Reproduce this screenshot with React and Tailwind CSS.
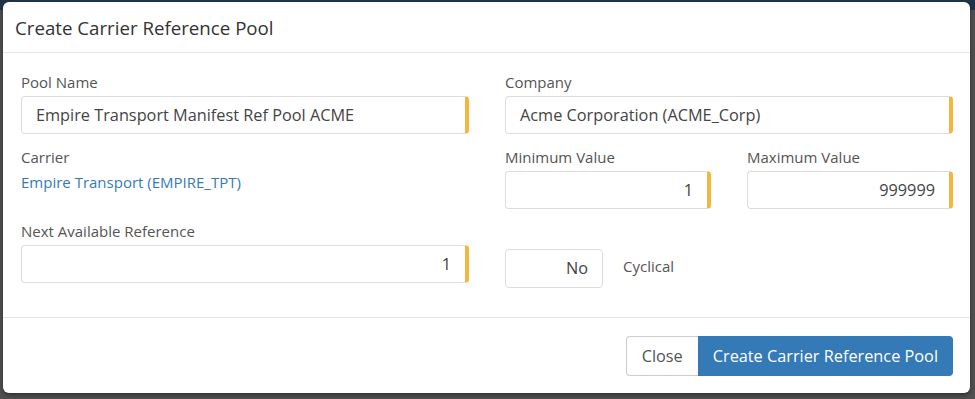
const FONT = { fontFamily: '"Open Sans", "Noto Sans", sans-serif' }

function Field({ label, value, align = 'left', className = '' }) {
  return (
    <div className={className}>
      <label className="block text-[15px] leading-5 text-[#555] mb-[4px]">{label}</label>
      <div className={`h-[38px] flex items-center px-[14px] bg-white border border-[#ddd] border-r-4 border-r-[#f4b73e] rounded-[4px] text-[16.3px] text-[#444] ${align === 'right' ? 'justify-end' : ''}`}>
        {value}
      </div>
    </div>
  )
}

export default function App() {
  return (
    <div style={FONT} className="h-[399px] w-[975px] overflow-hidden bg-[linear-gradient(#1f3547_0,#1f3547_10px,#4f4f4f_10px)] pt-[2px] pl-[3px]">
      <div className="w-[967px] h-[391px] bg-white rounded-[6px] shadow-[0_2px_4px_rgba(0,0,0,0.4)] flex flex-col">
        <div className="h-[51px] border-b border-[#e5e5e5] flex items-center px-[12px] pt-[2px]">
          <h1 className="text-[18.7px] text-[#333]">Create Carrier Reference Pool</h1>
        </div>

        <div className="flex gap-[36px] pl-[18px] pr-[17px] pt-[19px] h-[265px] border-b border-[#e5e5e5]">
          <div className="flex-1 flex flex-col">
            <Field label="Pool Name" value="Empire Transport Manifest Ref Pool ACME" />
            <div className="mt-[13px]">
              <div className="text-[15px] leading-5 text-[#555] mb-[3px]">Carrier</div>
              <a className="text-[15px] leading-5 text-[#337ab7]">Empire Transport (EMPIRE_TPT)</a>
            </div>
            <Field className="mt-[27px]" label="Next Available Reference" value="1" align="right" />
          </div>

          <div className="flex-1 flex flex-col">
            <Field label="Company" value="Acme Corporation (ACME_Corp)" />
            <div className="mt-[13px] flex gap-[36px]">
              <Field className="flex-1" label="Minimum Value" value="1" align="right" />
              <Field className="flex-1" label="Maximum Value" value="999999" align="right" />
            </div>
            <div className="mt-[40px] flex items-center gap-[20px]">
              <div className="w-[98px] h-[39px] border border-[#ddd] rounded-[4px] flex items-center justify-end pr-[14px] text-[16.3px] text-[#444]">No</div>
              <span className="text-[15px] text-[#555] -mt-[4px]">Cyclical</span>
            </div>
          </div>
        </div>

        <div className="flex justify-end pr-[17px] pt-[18px]">
          <button className="h-[40px] px-[15px] border border-[#ccc] border-r-0 rounded-l-[4px] bg-white text-[16.3px] text-[#555]">Close</button>
          <button className="h-[40px] px-[15px] rounded-r-[4px] bg-[#337ab7] text-[16.3px] text-white">Create Carrier Reference Pool</button>
        </div>
      </div>
    </div>
  )
}
